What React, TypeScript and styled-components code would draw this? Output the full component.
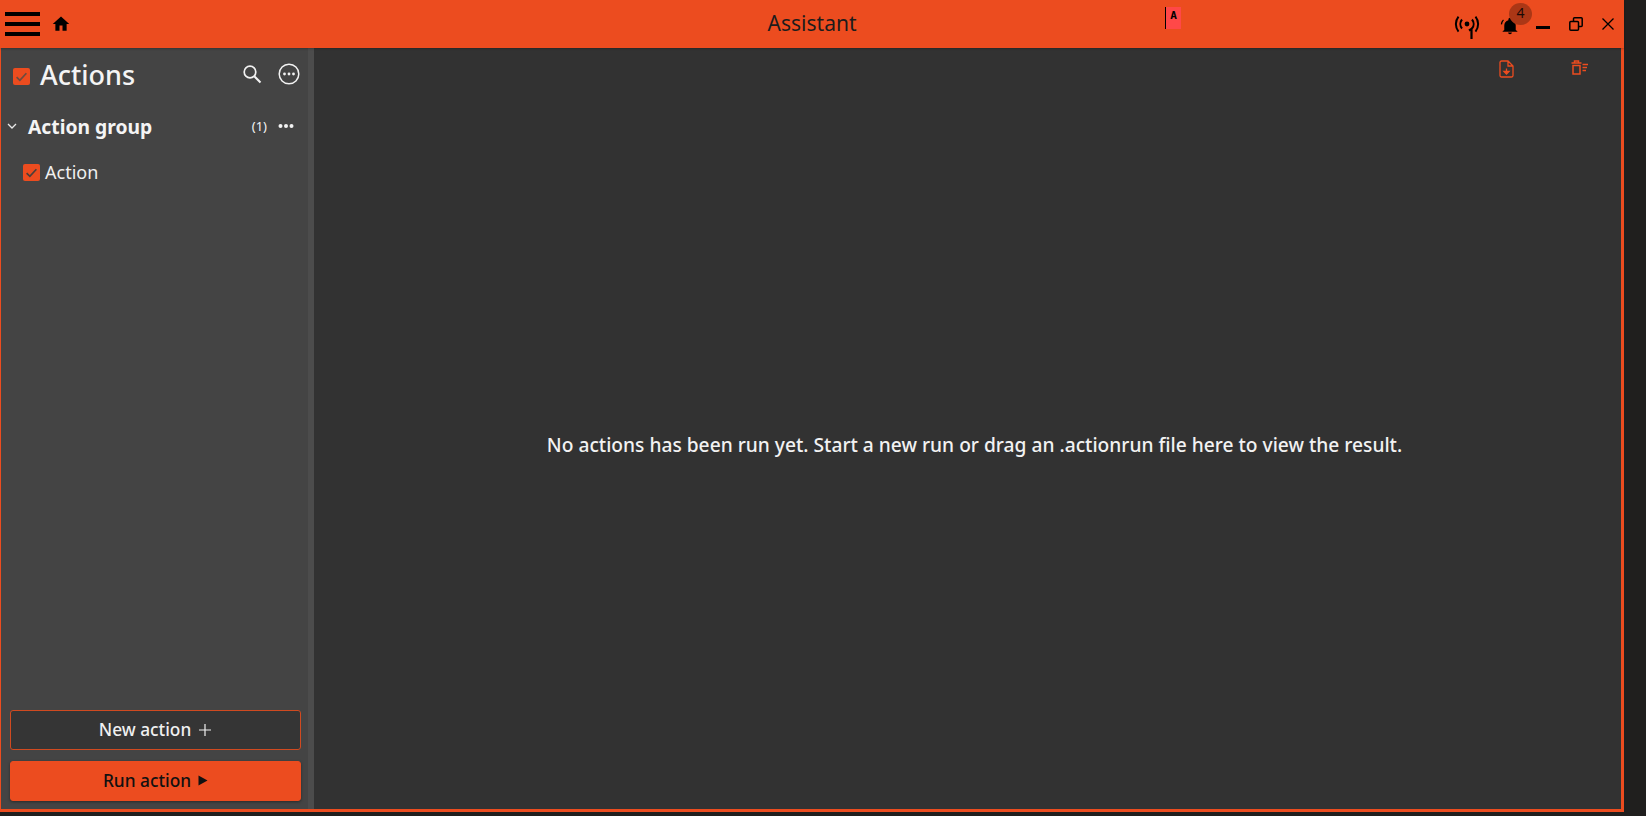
import React from "react";
import styled, { createGlobalStyle } from "styled-components";

const Global = createGlobalStyle`
  html, body { margin: 0; padding: 0; height: 100%; background: #201f1e; overflow: hidden; }
  #root { height: 100%; }
  * { box-sizing: border-box; }
`;

const orange = "#ec4c1f";

const Page = styled.div`
  width: 1646px;
  height: 816px;
  background: #201f1e;
  font-family: "Noto Sans", "Open Sans", sans-serif;
`;
const Window = styled.div`
  width: 1624px;
  height: 812px;
  display: flex;
  flex-direction: column;
  background: ${orange};
  padding: 0 3px 3px 1px;
`;
const TitleBar = styled.header`
  height: 48px;
  flex: none;
  margin: 0 -3px 0 -1px;
  display: grid;
  grid-template-columns: 1fr 1fr;
  align-items: center;
  background: ${orange};
  box-shadow: 0 1px 2px rgba(0,0,0,.25);
  position: relative;
  z-index: 1;
`;
const TitleLeft = styled.div`
  display: flex;
  align-items: center;
  padding-left: 5px;
  gap: 12px;
`;
const Burger = styled.div`
  width: 35px;
  height: 24px;
  display: flex;
  flex-direction: column;
  justify-content: space-between;
  span { display: block; height: 4px; background: #000; }
`;
const Title = styled.div`
  position: absolute;
  left: 0;
  right: 0;
  top: 9px;
  text-align: center;
  font-size: 21px;
  line-height: 29px;
  color: #1c1c1c;
  font-weight: 400;
`;
const TitleRight = styled.div`
  height: 48px;
  display: flex;
  align-items: flex-start;
  padding-right: 10px;
  position: relative;
  z-index: 1;
`;
const Marker = styled.div`
  margin: 7px auto 0 353px;
  width: 16px;
  height: 22px;
  background: #ff4848;
  border-left: 1px solid #000;
  color: #000;
  font: 700 11px/18px "DejaVu Sans Mono", monospace;
  text-align: center;
`;
const Slot = styled.span<{ $ml: number; $mt: number }>`
  position: relative;
  margin-left: ${(p) => p.$ml}px;
  margin-top: ${(p) => p.$mt}px;
  display: block;
  line-height: 0;
`;
const Badge = styled.div`
  position: absolute;
  left: 9px;
  top: -14px;
  width: 23px;
  height: 22px;
  border-radius: 50%;
  background: #ab3716;
  color: #1a0a06;
  font-size: 14px;
  line-height: 20px;
  text-align: center;
`;
const Body = styled.div`
  flex: 1;
  min-height: 0;
  display: flex;
`;
const Sidebar = styled.aside`
  width: 313px;
  flex: none;
  display: flex;
  flex-direction: column;
  background: #444444;
  border-right: 6px solid #4c4c4c;
`;
const SideHead = styled.div`
  height: 52px;
  display: flex;
  align-items: center;
  padding: 0 8px 0 12px;
`;
const Heading = styled.h1`
  margin: 2px 0 0 10px;
  flex: 1;
  font-size: 27px;
  font-weight: 500;
  color: #f4f4f4;
  line-height: 36px;
`;
const Check = styled.span<{ $head?: boolean }>`
  display: inline-flex;
  width: 17px;
  height: 17px;
  border-radius: 2px;
  background: ${orange};
  align-items: center;
  justify-content: center;
  flex: none;
  margin-top: ${(p) => (p.$head ? "5px" : "0")};
`;
const IconSlot = styled.span`
  display: flex;
  margin-left: 16px;
`;
const GroupRow = styled.div`
  margin-top: 11px;
  height: 30px;
  display: flex;
  align-items: center;
  padding: 0 14px 0 6px;
`;
const GroupTitle = styled.div`
  flex: 1;
  margin-left: 11px;
  font-size: 19.3px;
  font-weight: 700;
  color: #f4f4f4;
`;
const Count = styled.span`
  font-size: 13px;
  color: #f4f4f4;
  margin-right: 11px;
`;
const ActionRow = styled.div`
  margin-top: 16px;
  height: 30px;
  display: flex;
  align-items: center;
  padding-left: 22px;
  gap: 5px;
  font-size: 18px;
  color: #f0f0f0;
`;
const Spacer = styled.div`
  flex: 1;
`;
const Buttons = styled.div`
  display: flex;
  flex-direction: column;
  gap: 11px;
  padding: 0 6px 8px 9px;
`;
const Btn = styled.button<{ $primary?: boolean }>`
  height: 40px;
  width: 291px;
  display: flex;
  align-items: center;
  justify-content: center;
  gap: 7px;
  padding: 0 0 2px;
  border-radius: 3px;
  font-family: inherit;
  font-size: 17.3px;
  font-weight: 500;
  border: 1px solid ${(p) => (p.$primary ? orange : "#d04a20")};
  background: ${(p) => (p.$primary ? orange : "#353535")};
  color: ${(p) => (p.$primary ? "#111" : "#f0f0f0")};
  box-shadow: ${(p) => (p.$primary ? "0 1px 3px rgba(0,0,0,.4)" : "none")};
`;
const Main = styled.main`
  flex: 1;
  background: #323232;
  display: flex;
  flex-direction: column;
`;
const MainTools = styled.div`
  height: 36px;
  flex: none;
  display: flex;
  justify-content: flex-end;
  align-items: flex-start;
  gap: 57px;
  padding: 12px 33px 0 0;
`;
const Empty = styled.div`
  padding: 348px 0 0 14px;
  text-align: center;
  font-size: 19.2px;
  font-weight: 500;
  color: #f2f2f2;
  line-height: 26px;
`;

const Tick = ({ c = "#6a4c40", s = 13 }: { c?: string; s?: number }) => (
  <svg width={s} height={s} viewBox="0 0 12 12" fill="none">
    <path d="M1.500 6.500 4.500 9.500 10.500 3" stroke={c} strokeWidth="1.600" />
  </svg>
);

export default function App() {
  return (
    <Page>
      <Global />
      <Window>
        <TitleBar>
          <TitleLeft>
            <Burger><span /><span /><span /></Burger>
            <svg width="18" height="18" viewBox="0 0 24 24"><path d="M10 21v-7h4v7h5.500v-9H23L12 2 1 12h3.500v9z" fill="#000" /></svg>
          </TitleLeft>
          <Title>Assistant</Title>
          <TitleRight>
            <Marker>A</Marker>
            <Slot $ml={0} $mt={14}>
              <svg width="26" height="26" viewBox="0 0 26 26" fill="none" stroke="#000" strokeWidth="2">
                <circle cx="13" cy="10" r="2.400" fill="#000" stroke="none" />
                <path d="M8 5.500a7 7 0 0 0 0 9M18 5.500a7 7 0 0 1 0 9M4.500 2.500a12 12 0 0 0 0 15M21.500 2.500a12 12 0 0 1 0 15" />
                <path d="M15 16.500l2.500-1.500V25" strokeWidth="2.200" />
              </svg>
            </Slot>
            <Slot $ml={20} $mt={17}>
              <svg width="20" height="18" viewBox="0 0 24 22"><path d="M12 21a2.400 2.400 0 0 0 2.400-2.200H9.600A2.400 2.400 0 0 0 12 21zM19 16v-5.500c0-3.300-1.800-5.900-5-6.600V3a2 2 0 0 0-4 0v.9C6.800 4.600 5 7.200 5 10.500V16l-2 1.500V18h18v-.5z" fill="#000" /><path d="M4 3.500A9 9 0 0 0 1.500 9" stroke="#000" strokeWidth="1.500" fill="none" /></svg>
              <Badge>4</Badge>
            </Slot>
            <Slot $ml={16} $mt={23}>
              <svg width="14" height="3"><rect width="14" height="3" fill="#000" /></svg>
            </Slot>
            <Slot $ml={19} $mt={17}>
              <svg width="14" height="14" viewBox="0 0 14 14" fill="none" stroke="#000" strokeWidth="1.500"><rect x="0.800" y="4.500" width="8.700" height="8.700" rx="1" /><path d="M4.500 4.500V1.800a1 1 0 0 1 1-1h6.700a1 1 0 0 1 1 1v6.700a1 1 0 0 1-1 1H9.500" /></svg>
            </Slot>
            <Slot $ml={19} $mt={18}>
              <svg width="12" height="12" viewBox="0 0 12 12" fill="none" stroke="#000" strokeWidth="1.300"><path d="M.5.500l11 11M11.500.500l-11 11" /></svg>
            </Slot>
          </TitleRight>
        </TitleBar>
        <Body>
          <Sidebar>
            <SideHead>
              <Check $head><Tick /></Check>
              <Heading>Actions</Heading>
              <IconSlot>
                <svg width="20" height="20" viewBox="0 0 20 20" fill="none" stroke="#f2f2f2" strokeWidth="1.700"><circle cx="8" cy="8" r="5.800" /><path d="M12.300 12.300 18.500 18.500" strokeWidth="2" /></svg>
              </IconSlot>
              <IconSlot>
                <svg width="22" height="22" viewBox="0 0 22 22" fill="none"><circle cx="11" cy="11" r="9.800" stroke="#f2f2f2" strokeWidth="1.500" /><circle cx="6.500" cy="11" r="1.400" fill="#f2f2f2" /><circle cx="11" cy="11" r="1.400" fill="#f2f2f2" /><circle cx="15.500" cy="11" r="1.400" fill="#f2f2f2" /></svg>
              </IconSlot>
            </SideHead>
            <GroupRow>
              <svg width="10" height="8" viewBox="0 0 10 8" fill="none" stroke="#e8e8e8" strokeWidth="1.300"><path d="M1 2l4 4 4-4" /></svg>
              <GroupTitle>Action group</GroupTitle>
              <Count>(1)</Count>
              <svg width="16" height="6" viewBox="0 0 16 6" fill="#f2f2f2"><circle cx="2.500" cy="3" r="2" /><circle cx="8" cy="3" r="2" /><circle cx="13.500" cy="3" r="2" /></svg>
            </GroupRow>
            <ActionRow>
              <Check><Tick c="#4a3f3a" /></Check>
              Action
            </ActionRow>
            <Spacer />
            <Buttons>
              <Btn>
                New action
                <svg width="14" height="14" viewBox="0 0 14 14" fill="none" stroke="#f0f0f0" strokeWidth="1.200"><path d="M1 8h12M7 2v12" /></svg>
              </Btn>
              <Btn $primary>
                Run action
                <svg width="10" height="11" viewBox="0 0 10 11"><path d="M0.500 0.500v10l9-5z" fill="#111" /></svg>
              </Btn>
            </Buttons>
          </Sidebar>
          <Main>
            <MainTools>
              <svg width="15" height="18" viewBox="0 0 15 18" fill="none" stroke={orange} strokeWidth="1.300"><path d="M2.500 1h6.500l5 5v9.500a1.500 1.500 0 0 1-1.500 1.500h-10A1.500 1.500 0 0 1 1 15.500v-13A1.500 1.500 0 0 1 2.500 1zM9 1v5h5" /><path d="M7.500 8.500v3M5 11.500 7.500 14l2.500-2.500z" fill={orange} /></svg>
              <svg width="17" height="15" viewBox="0 0 17 15" fill="none" stroke={orange} strokeWidth="1.500"><path d="M.5 3h10M3.500 3V1h4v2M2 5.500h7V14H2zM11.500 4.500H17M11.500 7.500H16M11.500 10.500H15" /></svg>
            </MainTools>
            <Empty>No actions has been run yet. Start a new run or drag an .actionrun file here to view the result.</Empty>
          </Main>
        </Body>
      </Window>
    </Page>
  );
}
